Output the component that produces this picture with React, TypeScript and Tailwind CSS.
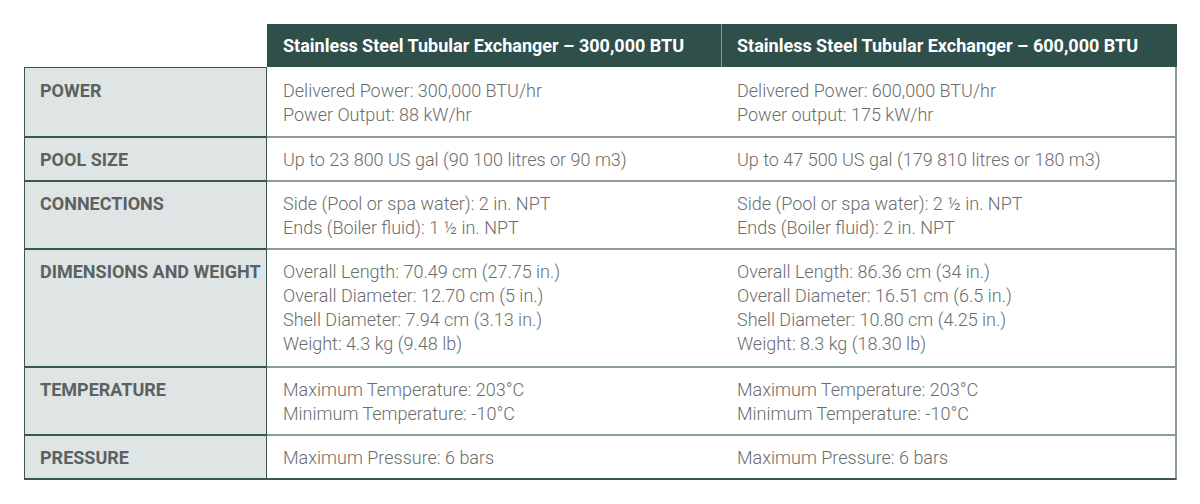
import React from "react";

const rows: { label: string; a: string[]; b: string[] }[] = [
  {
    label: "POWER",
    a: ["Delivered Power: 300,000 BTU/hr", "Power Output: 88 kW/hr"],
    b: ["Delivered Power: 600,000 BTU/hr", "Power output: 175 kW/hr"],
  },
  {
    label: "POOL SIZE",
    a: ["Up to 23 800 US gal (90 100 litres or 90 m3)"],
    b: ["Up to 47 500 US gal (179 810 litres or 180 m3)"],
  },
  {
    label: "CONNECTIONS",
    a: ["Side (Pool or spa water): 2 in. NPT", "Ends (Boiler fluid): 1 ½ in. NPT"],
    b: ["Side (Pool or spa water): 2 ½ in. NPT", "Ends (Boiler fluid): 2 in. NPT"],
  },
  {
    label: "DIMENSIONS AND WEIGHT",
    a: [
      "Overall Length: 70.49 cm (27.75 in.)",
      "Overall Diameter: 12.70 cm (5 in.)",
      "Shell Diameter: 7.94 cm (3.13 in.)",
      "Weight: 4.3 kg (9.48 lb)",
    ],
    b: [
      "Overall Length: 86.36 cm (34 in.)",
      "Overall Diameter: 16.51 cm (6.5 in.)",
      "Shell Diameter: 10.80 cm (4.25 in.)",
      "Weight: 8.3 kg (18.30 lb)",
    ],
  },
  {
    label: "TEMPERATURE",
    a: ["Maximum Temperature: 203°C", "Minimum Temperature: -10°C"],
    b: ["Maximum Temperature: 203°C", "Minimum Temperature: -10°C"],
  },
  {
    label: "PRESSURE",
    a: ["Maximum Pressure: 6 bars"],
    b: ["Maximum Pressure: 6 bars"],
  },
];

export default function App() {
  return (
    <div className="w-[1200px] h-[504px] bg-white pt-[24px] pl-[24px] font-['Roboto',sans-serif]">
      {/* header */}
      <div className="grid grid-cols-[243px_454px_456px] h-[43px]">
        <div />
        <div className="bg-[#2f4f4a] flex items-center px-[16px] text-white font-bold text-[18px]">
          Stainless Steel Tubular Exchanger – 300,000 BTU
        </div>
        <div className="bg-[#2f4f4a] border-l border-[#8a9c99] flex items-center px-[15px] text-white font-bold text-[18px]">
          Stainless Steel Tubular Exchanger – 600,000 BTU
        </div>
      </div>

      {rows.map((r, i) => {
        const first = i === 0;
        const last = i === rows.length - 1;
        const tall = r.a.length === 4;
        return (
          <div key={r.label} className="grid grid-cols-[243px_454px_456px]">
            <div
              className={`bg-[#dfe5e4] border-l border-r border-[#3a5651] pl-[15px] pr-[2px] whitespace-nowrap text-[18px] leading-[24px] font-bold text-[#5b6261] ${
                first ? "border-t pt-[11px]" : "border-t-2 pt-[10px]"
              } ${last ? "border-b-2" : ""}`}
            >
              {r.label}
            </div>
            {[r.a, r.b].map((lines, j) => (
              <div
                key={j}
                className={`px-[16px] text-[18px] leading-[24px] font-light text-[#6a6d6c] ${
                  first
                    ? "pt-[12px] pb-[9px]"
                    : `border-t-2 border-t-[#8a9c99] pt-[10px] ${tall ? "pb-[10px]" : "pb-[8px]"}`
                } ${j === 1 ? "border-r-2 border-r-[#8a9c99]" : ""} ${
                  last ? "border-b-2 border-b-[#3a5651]" : ""
                }`}
              >
                {lines.map((l) => (
                  <div key={l}>{l}</div>
                ))}
              </div>
            ))}
          </div>
        );
      })}
    </div>
  );
}
